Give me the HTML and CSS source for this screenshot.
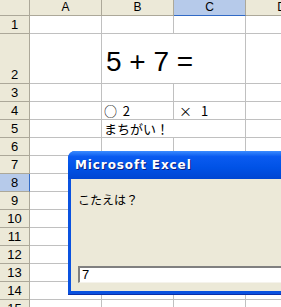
FILE: index.html
```html
<!DOCTYPE html>
<html lang="ja">
<head>
<meta charset="utf-8">
<link rel="stylesheet" href="styles.css">
</head>
<body>
<div class="sheet">
  <div class="grid">
    <div class="corner"></div>
    <div class="colh">A</div>
    <div class="colh">B</div>
    <div class="colh sel">C</div>
    <div class="colh">D</div>

    <div class="rowh">1</div><div class="c"></div><div class="c"></div><div class="c"></div><div class="c"></div>
    <div class="rowh tall">2</div><div class="c tall"></div><div class="c tall big span2">5 + 7 =</div><div class="c tall"></div>
    <div class="rowh">3</div><div class="c"></div><div class="c"></div><div class="c"></div><div class="c"></div>
    <div class="rowh">4</div><div class="c"></div><div class="c jp">○&nbsp;&nbsp;2</div><div class="c jp"><span class="mark">×</span>1</div><div class="c"></div>
    <div class="rowh">5</div><div class="c"></div><div class="c jp span2">まちがい！</div><div class="c"></div>
    <div class="rowh">6</div><div class="c"></div><div class="c"></div><div class="c"></div><div class="c"></div>
    <div class="rowh">7</div><div class="c"></div><div class="c"></div><div class="c"></div><div class="c"></div>
    <div class="rowh sel">8</div><div class="c"></div><div class="c"></div><div class="c"></div><div class="c"></div>
    <div class="rowh">9</div><div class="c"></div><div class="c"></div><div class="c"></div><div class="c"></div>
    <div class="rowh">10</div><div class="c"></div><div class="c"></div><div class="c"></div><div class="c"></div>
    <div class="rowh">11</div><div class="c"></div><div class="c"></div><div class="c"></div><div class="c"></div>
    <div class="rowh">12</div><div class="c"></div><div class="c"></div><div class="c"></div><div class="c"></div>
    <div class="rowh">13</div><div class="c"></div><div class="c"></div><div class="c"></div><div class="c"></div>
    <div class="rowh">14</div><div class="c"></div><div class="c"></div><div class="c"></div><div class="c"></div>
    <div class="rowh">15</div><div class="c"></div><div class="c"></div><div class="c"></div><div class="c"></div>
  </div>

  <div class="dialog">
    <div class="titlebar">Microsoft Excel</div>
    <div class="dbody">
      <div class="prompt">こたえは？</div>
      <div class="input">7</div>
    </div>
  </div>
</div>
</body>
</html>
```
FILE: styles.css
```css
* { box-sizing: border-box; margin: 0; padding: 0; }
html, body { width: 281px; height: 307px; overflow: hidden; background: #fff; }
body { font-family: "Liberation Sans", "Noto Sans CJK JP", sans-serif; }

.sheet { position: relative; width: 281px; height: 307px; overflow: hidden; }

.grid {
  display: grid;
  grid-template-columns: 30px 72px 72px 72px 72px;
  grid-auto-rows: 18px;
  grid-template-rows: 16px 18px 50px;
}

.corner, .colh, .rowh {
  background: #ECE9D8;
  border-right: 1px solid #ACA899;
  border-bottom: 1px solid #ACA899;
  color: #000;
  font-size: 13px;
  display: flex;
  align-items: center;
  justify-content: center;
}
.colh { font-size: 12px; line-height: 15px; }
.colh.sel { background: #B6CAEA; border-bottom-color: #316AC5; }
.rowh { align-items: flex-end; padding-bottom: 1px; }
.rowh.sel { background: #B6CAEA; border-right-color: #316AC5; }

.c {
  border-right: 1px solid #C0C0C0;
  border-bottom: 1px solid #C0C0C0;
  background: #fff;
  white-space: nowrap;
  overflow: visible;
}
.span2 { grid-column: span 2; }

.big {
  font-family: "Liberation Sans", sans-serif;
  font-size: 28px;
  padding-left: 4px;
  display: flex;
  align-items: center;
  padding-top: 6px;
}
.jp {
  font-family: "Noto Sans CJK JP", sans-serif;
  font-size: 13px;
  line-height: 17px;
  padding-left: 2px;
}
.mark { display: inline-block; width: 25px; padding-left: 3px; }

.dialog {
  position: absolute;
  left: 68px;
  top: 151px;
  width: 260px;
  height: 143px;
  background: #0A52E0;
  border-radius: 7px 7px 0 0;
  padding: 0 3px 3px 3px;
  display: flex;
  flex-direction: column;
  box-shadow: 0 1px 0 #0B2FA8;
}
.titlebar {
  height: 28px;
  flex: none;
  background: linear-gradient(#3B8CFF 0%, #0A5BF0 20%, #0052E6 60%, #0046D2 100%);
  margin: 0 -3px;
  border-radius: 7px 7px 0 0;
  color: #fff;
  font-family: "DejaVu Sans", sans-serif;
  font-weight: bold;
  font-size: 12px;
  padding-left: 7px;
  display: flex;
  align-items: center;
  text-shadow: 1px 1px 0 #0A1E80;
  letter-spacing: 0.9px;
}
.dbody {
  flex: 1;
  background: #ECE9D8;
  display: flex;
  flex-direction: column;
  padding: 13px 0 8px 7px;
}
.prompt {
  font-family: "Noto Sans CJK JP", sans-serif;
  font-size: 12px;
  line-height: 16px;
  color: #000;
  flex: 1;
}
.input {
  height: 17px;
  background: #fff;
  border-top: 2px solid #808080;
  border-left: 2px solid #808080;
  border-bottom: 1px solid #F5F3EC;
  font-family: "Liberation Sans", sans-serif;
  font-size: 13px;
  line-height: 14px;
  padding-left: 2px;
}
```
